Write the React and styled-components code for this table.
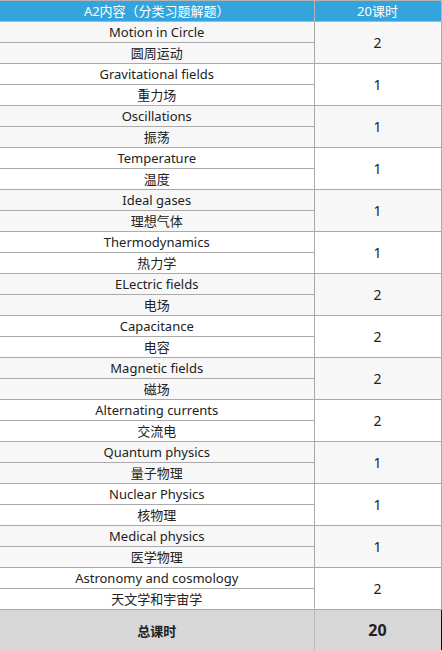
import styled, { createGlobalStyle } from "styled-components";

const GlobalStyle = createGlobalStyle`
  html, body {
    margin: 0;
    padding: 0;
    background: #ffffff;
  }
  body {
    font-family: "Noto Sans", "Noto Sans CJK SC", sans-serif;
    color: #222;
  }
`;

const topics = [
  { en: "Motion in Circle", zh: "圆周运动", hours: 2 },
  { en: "Gravitational fields", zh: "重力场", hours: 1 },
  { en: "Oscillations", zh: "振荡", hours: 1 },
  { en: "Temperature", zh: "温度", hours: 1 },
  { en: "Ideal gases", zh: "理想气体", hours: 1 },
  { en: "Thermodynamics", zh: "热力学", hours: 1 },
  { en: "ELectric fields", zh: "电场", hours: 2 },
  { en: "Capacitance", zh: "电容", hours: 2 },
  { en: "Magnetic fields", zh: "磁场", hours: 2 },
  { en: "Alternating currents", zh: "交流电", hours: 2 },
  { en: "Quantum physics", zh: "量子物理", hours: 1 },
  { en: "Nuclear Physics", zh: "核物理", hours: 1 },
  { en: "Medical physics", zh: "医学物理", hours: 1 },
  { en: "Astronomy and cosmology", zh: "天文学和宇宙学", hours: 2 },
];

const Table = styled.table`
  border-collapse: collapse;
  width: 441px;
  table-layout: fixed;
  font-size: 13px;
`;

const HeadCell = styled.th`
  background: #34a4dc;
  color: #ffffff;
  font-weight: normal;
  height: 20px;
  padding: 0;
  line-height: 20px;
  border: 1px solid #b4b4b4;
  border-left: ${(p) => (p.$first ? "none" : "1px solid #b4b4b4")};
  text-align: center;
`;

const Cell = styled.td`
  background: ${(p) => (p.$shade ? "#f7f7f7" : "#ffffff")};
  height: 20px;
  padding: 0;
  line-height: 20px;
  border: 1px solid #aaaaaa;
  border-left: ${(p) => (p.$first ? "none" : "1px solid #aaaaaa")};
  text-align: center;
  vertical-align: middle;
`;

const HoursCell = styled(Cell)`
  font-size: 14px;
`;

const TotalCell = styled.td`
  background: #d7d7d7;
  height: 40px;
  padding: 0;
  border-top: 1.5px solid #111;
  border-right: ${(p) => (p.$last ? "1px solid #111" : "1px solid #bdb8c6")};
  border-bottom: none;
  text-align: center;
  font-weight: bold;
  font-size: ${(p) => (p.$big ? "16px" : "13px")};
`;

export default function App() {
  return (
    <>
      <GlobalStyle />
      <Table>
        <colgroup>
          <col style={{ width: 314 }} />
          <col style={{ width: 127 }} />
        </colgroup>
        <thead>
          <tr>
            <HeadCell $first>A2内容（分类习题解题）</HeadCell>
            <HeadCell>20课时</HeadCell>
          </tr>
        </thead>
        <tbody>
          {topics.flatMap((t, i) => {
            const shade = i % 2 === 0;
            return [
              <tr key={t.en}>
                <Cell $first $shade={shade}>{t.en}</Cell>
                <HoursCell rowSpan={2} $shade={shade}>
                  {t.hours}
                </HoursCell>
              </tr>,
              <tr key={t.zh}>
                <Cell $first $shade={shade}>{t.zh}</Cell>
              </tr>,
            ];
          })}
          <tr>
            <TotalCell>总课时</TotalCell>
            <TotalCell $last $big>20</TotalCell>
          </tr>
        </tbody>
      </Table>
    </>
  );
}
